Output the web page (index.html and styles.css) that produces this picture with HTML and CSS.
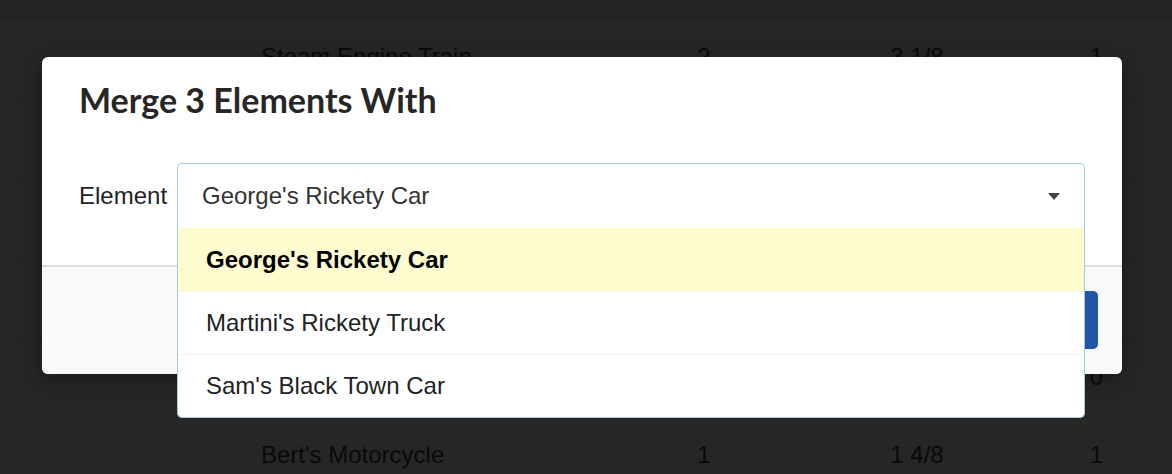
FILE: index.html
```html
<!DOCTYPE html>
<html>
<head>
<meta charset="utf-8">
<link rel="stylesheet" href="styles.css">
</head>
<body>
<div class="page">
  <div class="table">
    <div class="thead"></div>
    <div class="row"><span class="c-name">Steam Engine Train</span><span class="c-a">2</span><span class="c-b">3 1/8</span><span class="c-c">1</span></div>
    <div class="row"><span class="c-name"></span><span class="c-a"></span><span class="c-b"></span><span class="c-c"></span></div>
    <div class="row"><span class="c-name"></span><span class="c-a"></span><span class="c-b"></span><span class="c-c"></span></div>
    <div class="row"><span class="c-name"></span><span class="c-a"></span><span class="c-b"></span><span class="c-c"></span></div>
    <div class="row"><span class="c-name"></span><span class="c-a"></span><span class="c-b"></span><span class="c-c">0</span></div>
    <div class="row row-last"><span class="c-name">Bert's Motorcycle</span><span class="c-a">1</span><span class="c-b">1 4/8</span><span class="c-c">1</span></div>
  </div>

  <div class="modal">
    <div class="modal-header">
      <h2 class="modal-title">Merge 3 Elements With</h2>
    </div>
    <div class="modal-body">
      <label class="field-label">Element</label>
      <div class="select-wrap">
        <div class="select">
          <span class="select-value">George's Rickety Car</span>
          <span class="caret"></span>
        </div>
        <ul class="dropdown">
          <li class="option active">George's Rickety Car</li>
          <li class="option">Martini's Rickety Truck</li>
          <li class="option">Sam's Black Town Car</li>
        </ul>
      </div>
    </div>
    <div class="modal-footer">
      <button class="btn-primary">Merge</button>
    </div>
  </div>
</div>
</body>
</html>
```
FILE: styles.css
```css
html, body {
  margin: 0;
  padding: 0;
}
body {
  background: #262626;
  font-family: "Liberation Sans", Arial, sans-serif;
  width: 1172px;
  height: 474px;
  overflow: hidden;
}
.page {
  position: relative;
  width: 1172px;
  height: 474px;
  overflow: hidden;
}
.table {
  display: flex;
  flex-direction: column;
}
.thead {
  height: 17px;
  flex: none;
  background: #232323;
  border-bottom: 1px solid #212121;
}
.row {
  height: 80px;
  flex: none;
  border-bottom: 1px solid #212121;
  display: flex;
  align-items: center;
  font-size: 24px;
  color: #0a0a0a;
  padding-bottom: 2px;
  box-sizing: border-box;
}
.row-last {
  height: 56px;
  align-items: flex-start;
  padding: 23px 0 0;
  border-bottom: none;
}
.c-name {
  margin-left: 261px;
  width: 380px;
}
.c-a {
  width: 126px;
  text-align: center;
}
.c-b {
  width: 300px;
  text-align: center;
}
.c-c {
  width: 36px;
  text-align: right;
}

.modal {
  position: absolute;
  left: 42px;
  top: 57px;
  width: 1080px;
  height: 317px;
  background: #fff;
  border-radius: 6px;
  box-shadow: 0 5px 20px rgba(0, 0, 0, 0.35);
  display: flex;
  flex-direction: column;
}
.modal-header {
  padding: 22px 37px 0;
  height: 84px;
  box-sizing: border-box;
}
.modal-title {
  margin: 0;
  font-family: Lato, "Liberation Sans", sans-serif;
  font-weight: 700;
  font-size: 34px;
  line-height: 42px;
  color: #262626;
}
.modal-body {
  display: flex;
  align-items: flex-start;
  padding: 22px 37px 0;
  height: 124px;
  box-sizing: border-box;
}
.field-label {
  font-size: 24px;
  color: #222;
  width: 98px;
  line-height: 65px;
  flex: none;
}
.select-wrap {
  position: relative;
  flex: 1;
}
.select {
  height: 65px;
  box-sizing: border-box;
  border: 1px solid #a8c8d8;
  border-bottom: none;
  border-radius: 5px 5px 0 0;
  display: flex;
  align-items: center;
  padding: 0 24px 0 24px;
  background: #fff;
}
.select-value {
  flex: 1;
  font-size: 24px;
  color: #333;
}
.caret {
  width: 0;
  height: 0;
  border-left: 6px solid transparent;
  border-right: 6px solid transparent;
  border-top: 7px solid #444;
}
.dropdown {
  position: absolute;
  left: 0;
  right: 0;
  top: 65px;
  margin: 0;
  padding: 0;
  list-style: none;
  background: #fff;
  border: 1px solid #a8c8d8;
  border-top: none;
  border-radius: 0 0 5px 5px;
  z-index: 2;
}
.option {
  height: 63px;
  box-sizing: border-box;
  display: flex;
  align-items: center;
  padding-left: 28px;
  font-size: 24px;
  color: #222;
  border-top: 1px solid #f4f4f4;
}
.option:first-child {
  border-top: none;
}
.option.active {
  background: #fffcd0;
  font-weight: 700;
  color: #000;
}
.modal-footer {
  flex: 1;
  background: #f7f9fb;
  border-top: 2px solid #dcdcdc;
  border-radius: 0 0 6px 6px;
  display: flex;
  justify-content: flex-end;
  align-items: flex-start;
  padding: 24px 24px 0;
}
.btn-primary {
  height: 58px;
  padding: 0 30px;
  background: #2155a8;
  color: #fff;
  border: none;
  border-radius: 5px;
  font-family: "Liberation Sans", Arial, sans-serif;
  font-size: 24px;
}
```
